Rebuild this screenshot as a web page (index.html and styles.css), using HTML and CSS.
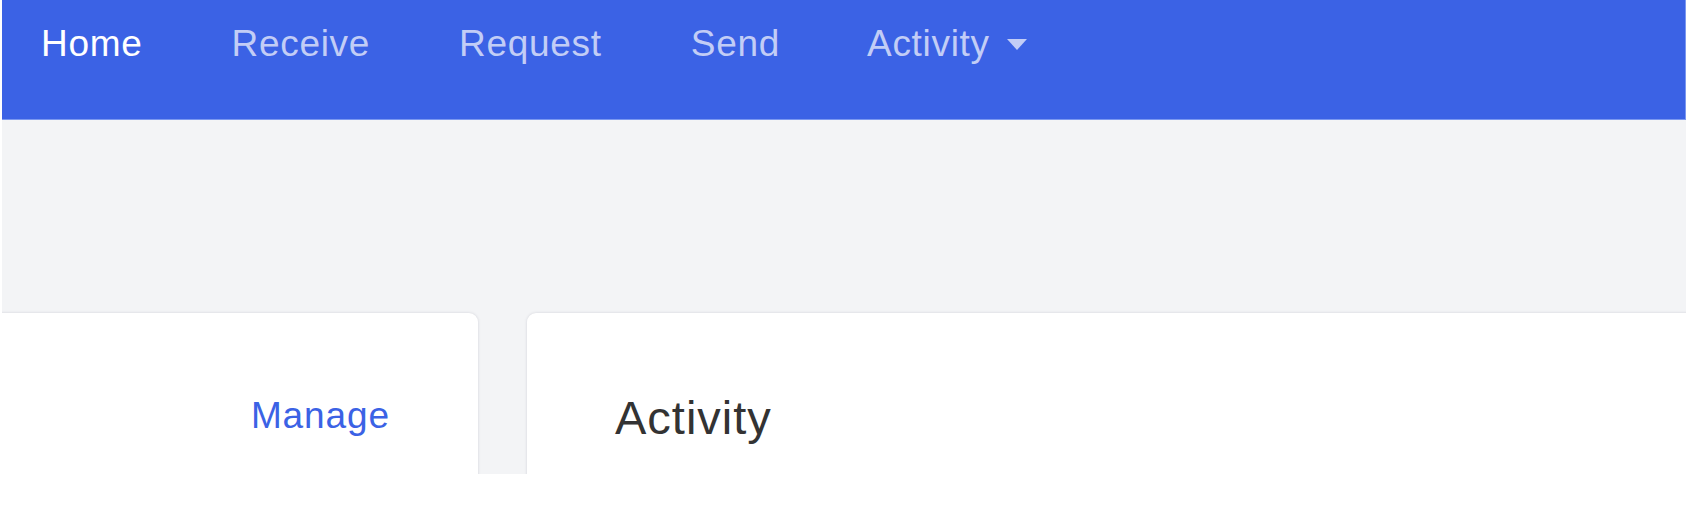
FILE: index.html
```html
<!DOCTYPE html>
<html lang="en">
<head>
<meta charset="utf-8">
<title>Home</title>
<link rel="stylesheet" href="styles.css">
</head>
<body>
<div class="frame">
  <nav class="topbar">
    <a class="nav-link active" href="#">Home</a>
    <a class="nav-link" href="#">Receive</a>
    <a class="nav-link" href="#">Request</a>
    <a class="nav-link" href="#">Send</a>
    <a class="nav-link dropdown" href="#">Activity<svg class="caret" width="20" height="11" viewBox="0 0 20 11"><polygon points="0,0 20,0 10,11" fill="currentColor"/></svg></a>
  </nav>
  <main class="content">
    <section class="card card-left">
      <a class="manage" href="#">Manage</a>
    </section>
    <section class="card card-right">
      <h2 class="card-title">Activity</h2>
    </section>
  </main>
</div>
</body>
</html>
```

FILE: styles.css
```css
html, body {
  margin: 0;
  padding: 0;
  background: #ffffff;
}

body {
  font-family: "Liberation Sans", Arial, sans-serif;
}

.frame {
  margin-left: 2px;
  width: 1684px;
  height: 474px;
  overflow: hidden;
  background: #f3f4f6;
}

.topbar {
  display: flex;
  align-items: flex-start;
  gap: 89px;
  height: 120px;
  box-sizing: border-box;
  padding: 23px 0 0 39px;
  background: #3b62e5;
  border-bottom: 1px solid #7b98f0;
  border-right: 1px solid #7b98f0;
}

.nav-link {
  font-size: 37px;
  line-height: 42px;
  letter-spacing: 0.7px;
  color: #c2cdf6;
  text-decoration: none;
  display: flex;
  align-items: center;
}

.nav-link.active {
  color: #ffffff;
}

.nav-link.dropdown {
  margin-left: -2px;
}

.caret {
  margin-left: 17px;
}

.content {
  display: flex;
  gap: 49px;
  padding-top: 193px;
  margin-left: -22px;
}

.card {
  background: #ffffff;
  border-radius: 9px;
  box-shadow: 0 0 3px rgba(60, 60, 90, 0.18);
  height: 300px;
  box-sizing: border-box;
}

.card-left {
  width: 498px;
  flex: none;
  text-align: right;
  padding: 82px 88px 0 0;
}

.card-right {
  flex: none;
  width: 1300px;
  padding: 77px 0 0 88px;
}

.manage {
  font-size: 37px;
  letter-spacing: 0.9px;
  color: #3b62e5;
  text-decoration: none;
}

.card-title {
  margin: 0;
  font-size: 47px;
  letter-spacing: 1px;
  font-weight: normal;
  line-height: normal;
  color: #333333;
}
```
